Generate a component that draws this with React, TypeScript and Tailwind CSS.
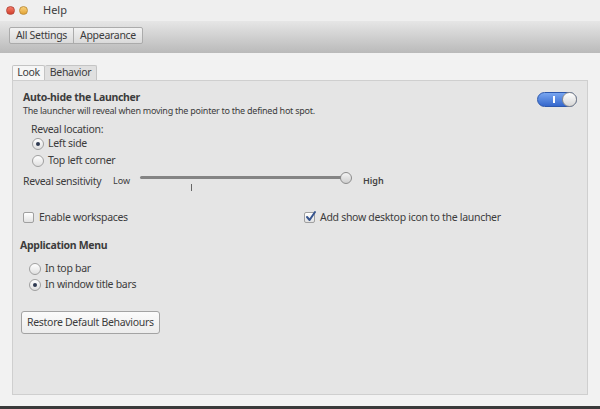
import React from "react";

const font = { fontFamily: '"Noto Sans", "DejaVu Sans", sans-serif' };

function Radio({ checked }: { checked?: boolean }) {
  return (
    <span className="w-[12px] h-[12px] rounded-full border border-[#a0a0a0] bg-gradient-to-b from-[#ffffff] to-[#e0e0e0] flex items-center justify-center shrink-0">
      {checked && <span className="w-[4px] h-[4px] rounded-full bg-[#2f3a52]" />}
    </span>
  );
}

function Check({ checked }: { checked?: boolean }) {
  return (
    <span className="relative w-[11px] h-[11px] rounded-[2px] border border-[#a0a0a0] bg-gradient-to-b from-[#ffffff] to-[#e2e2e2] shrink-0">
      {checked && (
        <svg className="absolute left-[0px] top-[-3px]" width="12" height="13" viewBox="0 0 12 13">
          <path d="M2 7 L4.6 10 L10 2" fill="none" stroke="#37558f" strokeWidth="2" strokeLinecap="round" strokeLinejoin="round" />
        </svg>
      )}
    </span>
  );
}

export default function App() {
  return (
    <div className="w-[600px] h-[409px] flex flex-col bg-[#f2f2f2] text-[#3c3c3c] text-[10.5px] tracking-[-0.3px] overflow-hidden" style={font}>
      {/* Title bar */}
      <div className="h-[21px] bg-[#efefef] flex items-center pl-[6px] shrink-0">
        <span className="w-[9px] h-[9px] rounded-full bg-gradient-to-b from-[#f47a68] to-[#d23f2b] border border-[#b8483c]" />
        <span className="ml-[4px] w-[9px] h-[9px] rounded-full bg-gradient-to-b from-[#fad27a] to-[#e2a332] border border-[#bf913f]" />
        <span className="ml-[15px] text-[11px] tracking-normal text-[#3c3c3c]">Help</span>
      </div>
      {/* Toolbar */}
      <div className="h-[32px] bg-gradient-to-b from-[#e6e6e6] to-[#bababa] flex items-start pt-[6px] pl-[9px] shrink-0">
        <div className="flex h-[17px] border border-[#ababab] rounded-[2px] bg-gradient-to-b from-[#f2f2f2] to-[#dadada]">
          <span className="flex items-center border-r border-[#ababab] w-[64px] justify-center whitespace-nowrap">All Settings</span>
          <span className="flex items-center w-[68px] justify-center whitespace-nowrap">Appearance</span>
        </div>
      </div>
      {/* Content */}
      <div className="flex-1 flex flex-col pl-[12px] pr-[12px] pt-[12px] pb-[11px]">
        <div className="flex h-[15px] items-end">
          <span className="h-[15px] w-[33px] flex items-center justify-center bg-[#f6f6f6] border border-b-0 border-[#c4c4c4] rounded-t-[2px]">Look</span>
          <span className="h-[15px] w-[52px] flex items-center justify-center bg-[#e0e0e0] border border-b-0 border-l-0 border-[#c4c4c4] rounded-t-[2px]">Behavior</span>
        </div>
        <div className="flex-1 bg-[#e5e5e5] border border-[#cfcfcf] flex flex-col pl-[10px] pr-[10px] pt-[9px]">
          <div className="flex items-start justify-between">
            <div className="flex flex-col">
              <span className="font-bold leading-[14px]">Auto-hide the Launcher</span>
              <span className="text-[9px] tracking-[-0.25px] leading-[13px]">The launcher will reveal when moving the pointer to the defined hot spot.</span>
            </div>
            <div className="mt-[2px] w-[40px] h-[15px] rounded-full bg-gradient-to-b from-[#79a6f0] to-[#3567cc] border border-[#2d58ad] relative">
              <span className="absolute left-[15px] top-[3px] w-[1.5px] h-[7px] bg-white" />
              <span className="absolute right-[-1px] top-[-1px] w-[15px] h-[15px] rounded-full bg-gradient-to-b from-[#ffffff] to-[#d6d6d6] border border-[#8a8a8a]" />
            </div>
          </div>
          <div className="ml-[8px] mt-[5px] leading-[14px]">Reveal location:</div>
          <div className="ml-[9px] flex items-center gap-[4px] h-[15px]">
            <Radio checked />
            <span>Left side</span>
          </div>
          <div className="ml-[9px] mt-[2px] flex items-center gap-[4px] h-[15px]">
            <Radio />
            <span>Top left corner</span>
          </div>
          <div className="flex items-start mt-[6px] h-[20px]">
            <span className="leading-[14px] w-[90px]">Reveal sensitivity</span>
            <span className="text-[9px] tracking-normal leading-[14px] w-[27px]">Low</span>
            <div className="relative w-[213px] h-[20px]">
              <span className="absolute left-[0px] top-[2px] w-[206px] h-[3px] rounded-full bg-[#848484]" />
              <span className="absolute left-[200px] top-[-2px] w-[12px] h-[12px] rounded-full bg-gradient-to-b from-[#f4f4f4] to-[#cfcfcf] border border-[#8c8c8c]" />
              <span className="absolute left-[51px] top-[10px] w-[1px] h-[7px] bg-[#666]" />
            </div>
            <span className="ml-[10px] text-[9px] tracking-normal leading-[14px] font-semibold text-[#444]">High</span>
          </div>
          <div className="flex items-center mt-[16px] h-[15px]">
            <div className="flex items-center gap-[5px] w-[281px]">
              <Check />
              <span>Enable workspaces</span>
            </div>
            <div className="flex items-center gap-[5px]">
              <Check checked />
              <span>Add show desktop icon to the launcher</span>
            </div>
          </div>
          <div className="-ml-[3px] mt-[13px] font-bold leading-[14px]">Application Menu</div>
          <div className="ml-[6px] mt-[9px] flex items-center gap-[4px] h-[15px]">
            <Radio />
            <span>In top bar</span>
          </div>
          <div className="ml-[6px] mt-[1px] flex items-center gap-[4px] h-[15px]">
            <Radio checked />
            <span>In window title bars</span>
          </div>
          <div className="mt-[19px] -ml-[2px]">
            <span className="inline-flex items-center h-[23px] px-[5px] border border-[#a3a3a3] rounded-[3px] bg-gradient-to-b from-[#fbfbfb] to-[#ececec]">Restore Default Behaviours</span>
          </div>
        </div>
      </div>
      <div className="h-[3px] bg-[#3a3a3a] shrink-0" />
    </div>
  );
}
